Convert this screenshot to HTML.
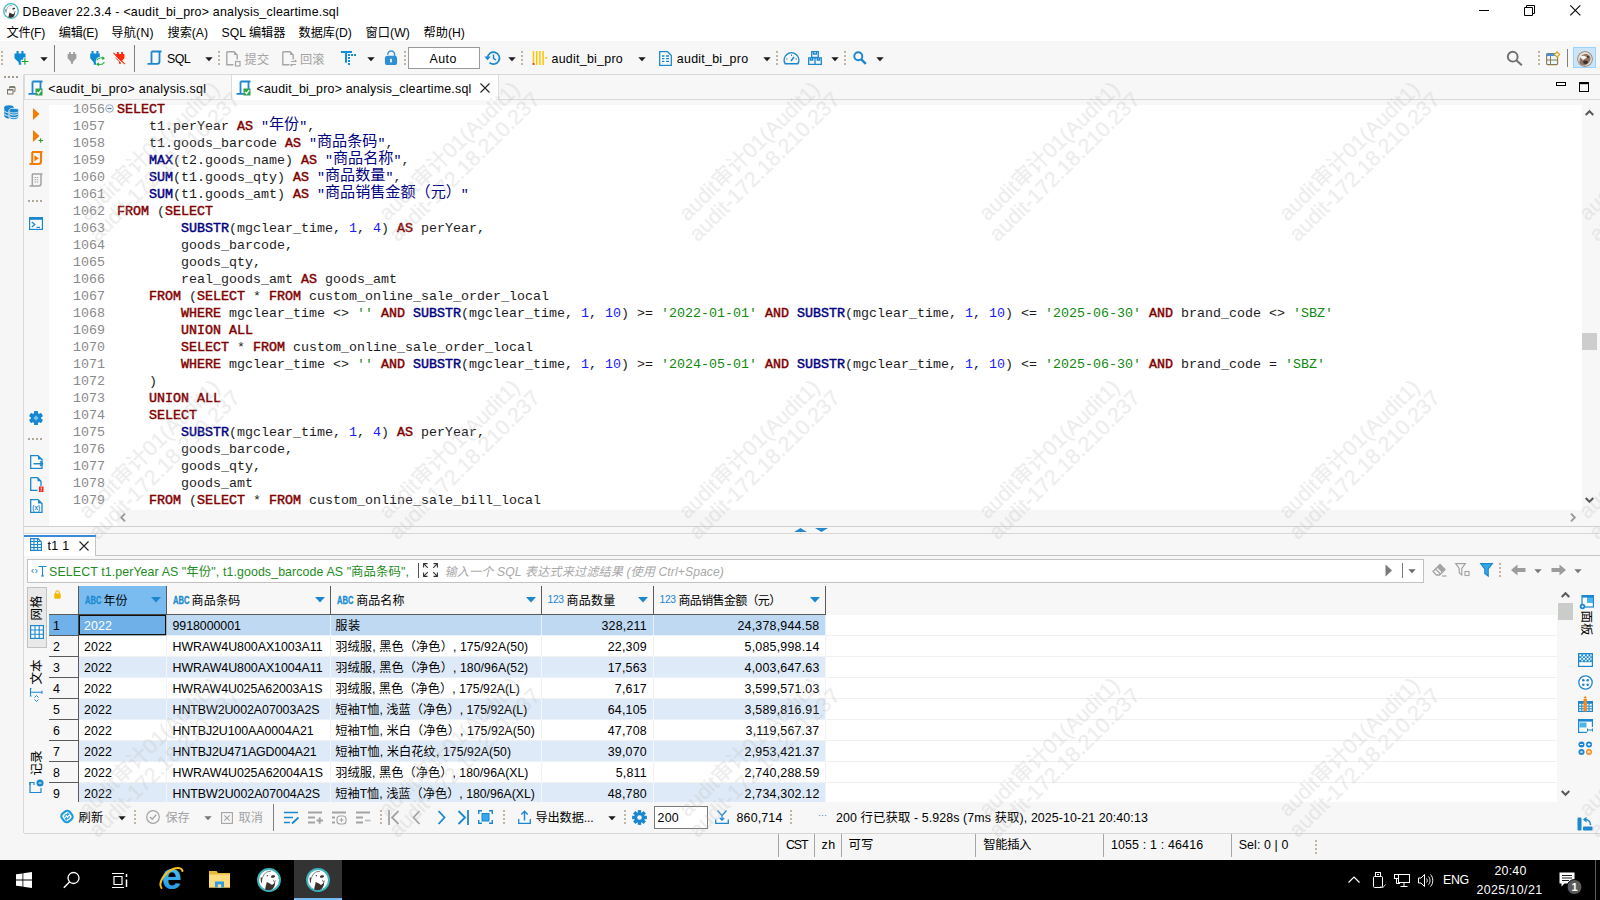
<!DOCTYPE html>
<html lang="zh"><head><meta charset="utf-8"><title>DBeaver</title>
<style>
*{box-sizing:border-box;margin:0;padding:0}
html,body{width:1600px;height:900px;overflow:hidden;background:#f0f0f0}
body{font-family:"Liberation Sans","Noto Sans CJK SC",sans-serif;font-size:12px;color:#000;position:relative}
.abs{position:absolute}
.t{position:absolute;white-space:pre;line-height:16px;height:16px}
svg{position:absolute;overflow:visible}
#title{left:0;top:0;width:1600px;height:22px;background:#fff}
#menu{left:0;top:22px;width:1600px;height:19px}
#menubg{left:0;top:22px;width:1600px;height:19px;background:#fff}
#tool{left:0;top:41px;width:1600px;height:33px;background:#f7f7f7}
#toolline{left:23px;top:74px;width:1577px;height:1px;background:#d9d9d9}
.sepv{position:absolute;width:1px;background:#a0a0a0}
.dots{position:absolute;width:2px;height:20px;background-image:linear-gradient(#b8b8b8 50%,transparent 50%);background-size:2px 4px}
.dd{position:absolute;width:0;height:0;border-left:4px solid transparent;border-right:4px solid transparent;border-top:4px solid #1a1a1a}
.mono{font-family:"Liberation Mono",monospace}

.ln{position:absolute;left:73px;width:32px;height:17px;line-height:17px;font-size:13.333px;color:#8a8a8a;white-space:pre}
.cl{position:absolute;height:17px;line-height:17px;font-size:13.333px;white-space:pre;color:#1c1c1c}
.cl .k{color:#7f0000;-webkit-text-stroke:0.450px #7f0000}
.cl .f{color:#000080;-webkit-text-stroke:0.450px #000080}
.cl .n{color:#1a1aff}
.cl .s{color:#0f8a0f}
.cl .q{color:#000080}
.cl .cj{font-family:"Noto Sans CJK SC",sans-serif;font-size:15.100px;line-height:1px;vertical-align:baseline;position:relative;top:-1px}

.vt{position:absolute}
.vt span{position:absolute;left:50%;top:50%;transform:translate(-50%,-50%) rotate(-90deg);white-space:pre;font-size:12.500px;line-height:16px}
.vt2{position:absolute}
.vt2 span{position:absolute;left:50%;top:50%;transform:translate(-50%,-50%) rotate(90deg);white-space:pre;font-size:12.500px;line-height:16px}
.abc{font-size:10px;font-weight:bold;color:#1b8bd1;-webkit-text-stroke:0.300px #1b8bd1;transform:scaleX(0.760);transform-origin:0 0}
.n123{font-size:10.300px;color:#1b87cf;letter-spacing:-0.350px}
.hd{font-size:12.500px}
.cell{font-size:12.600px}

.sb{font-size:12.500px}
.tk{color:#fff;font-size:12.600px}
.wm{position:absolute;width:0;height:0}
.wm div{position:absolute;left:-160px;top:-22px;width:320px;height:44px;text-align:center;white-space:pre;font-size:21.300px;line-height:22px;color:#bebebe;-webkit-text-stroke:0.200px #bebebe;opacity:0.270;transform:rotate(-44.500deg);transform-origin:50% 50%}
</style></head>
<body>
<div id="title" class="abs"><svg style="left:3px;top:3px" width="16" height="16" viewBox="0 0 32 32">
<circle cx="16" cy="16" r="14.600" fill="#fff" stroke="#3fb6be" stroke-width="2.600"/>
<path d="M10.700 28.500L13 18.800C14.500 19.800 17 20.500 19.900 22.600L22.200 21L24.500 17.200L23.700 22.600C23 25 22 26.500 20.700 28C18.500 30 13.500 30 10.700 28.500Z" fill="#3a2f2b"/>
<ellipse cx="21.400" cy="11.300" rx="2.800" ry="1.600" transform="rotate(-12 21.400 11.300)" fill="#3a2f2b"/>
<circle cx="13.800" cy="10.200" r="0.900" fill="#3a2f2b"/>
<path d="M5 12.500C6.500 12 7 14 6.800 16C6.600 18 6.800 19.500 6.500 20.500C5 18.500 4.500 15 5 12.500Z" fill="#4a3d38"/>
<path d="M6.800 15C7.500 11.500 10 6.500 13.500 5.200C15 4.600 17 4.500 18.500 4.700" stroke="#5a4d48" stroke-width="0.900" fill="none"/>
<path d="M21.800 15.700L23 18.800L24.900 16.500" stroke="#3a2f2b" stroke-width="0.800" fill="none"/></svg><div class="t" id="ttl" style="top:4.00px;font-size:12.4px;left:22.50px;letter-spacing:0.222px;">DBeaver 22.3.4 - &lt;audit_bi_pro&gt; analysis_cleartime.sql</div><svg style="left:1479px;top:5px" width="12" height="12"><path d="M0 5.500H10" stroke="#000" stroke-width="1" fill="none"/></svg><svg style="left:1524px;top:4px" width="12" height="12"><path d="M0.500 3.500H8.500V11.500H0.500Z M2.500 3.500V1.500H10.500V9.500H8.500" stroke="#000" stroke-width="1" fill="none"/></svg><svg style="left:1570px;top:5px" width="11" height="11"><path d="M0.300 0.300L10.300 10.300M10.300 0.300L0.300 10.300" stroke="#000" stroke-width="1.050" fill="none"/></svg></div>
<div id="menubg" class="abs"></div><div id="menu" class="abs" style="top:0;height:41px"><div class="t" style="top:25.00px;font-size:12.2px;left:6.50px;letter-spacing:-0.287px;">文件(F)</div><div class="t" style="top:25.00px;font-size:12.2px;left:58.75px;letter-spacing:-0.275px;">编辑(E)</div><div class="t" style="top:25.00px;font-size:12.2px;left:111.25px;letter-spacing:0.241px;">导航(N)</div><div class="t" style="top:25.00px;font-size:12.2px;left:167.50px;letter-spacing:-0.025px;">搜索(A)</div><div class="t" style="top:25.00px;font-size:12.2px;left:221.50px;letter-spacing:0.016px;">SQL 编辑器</div><div class="t" style="top:25.00px;font-size:12.2px;left:298.50px;letter-spacing:-0.014px;">数据库(D)</div><div class="t" style="top:25.00px;font-size:12.2px;left:365.50px;letter-spacing:0.080px;">窗口(W)</div><div class="t" style="top:25.00px;font-size:12.2px;left:423.50px;letter-spacing:0.021px;">帮助(H)</div></div>
<div id="tool" class="abs"></div><div id="toolline" class="abs"></div>
<div class="abs" id="tb" style="left:0;top:0"><div class="abs" style="left:1px;top:51px;width:2px;height:14px;background-image:linear-gradient(#bfb5a1 50%,transparent 50%);background-size:2px 4px"></div><svg style="left:9.5px;top:51px" width="24" height="16" viewBox="-10 0 24 16"><g transform="scale(1.0)"><path d="M-3.500 0h2.100v3h-2.100zM1.400 0h2.100v3h-2.100zM-5.50 2.400H5.50V7.300L1.250 11.400V13.800H-1.250V11.400L-5.50 7.300Z" fill="#0d8bd3"/></g><path d="M0.800 10.500H9M4.900 6.500V14.300" stroke="#f7f7f7" stroke-width="3.400" fill="none"/><path d="M1.600 10.500H8.400M4.900 7.200V13.800" stroke="#14a82b" stroke-width="1.150" fill="none"/></svg><svg style="left:39.5px;top:57px" width="8" height="5" viewBox="0 0 8 5"><path d="M0.3 0.3H7.700L4 4.300Z" fill="#1a1a1a"/></svg><div class="abs" style="left:54px;top:45px;width:1px;height:27px;background:#7f7f7f"></div><svg style="left:62.3px;top:52px" width="24" height="16" viewBox="-10 0 24 16"><g transform="scale(0.85)"><path d="M-3.500 0h2.100v3h-2.100zM1.400 0h2.100v3h-2.100zM-5.20 2.400H5.20V7.300L1.250 11.400V13.800H-1.250V11.400L-5.20 7.300Z" fill="#a0a0a0"/></g></svg><svg style="left:84.6px;top:51px" width="24" height="16" viewBox="-10 0 24 16"><g transform="scale(1.0)"><path d="M-3.500 0h2.100v3h-2.100zM1.400 0h2.100v3h-2.100zM-4.80 2.400H4.80V7.300L1.250 11.400V13.800H-1.250V11.400L-4.80 7.300Z" fill="#0d8bd3"/></g><circle cx="5.500" cy="10.500" r="4.800" fill="#f7f7f7"/><path d="M1.800 9.300C3 7 6 6.600 8.200 7.200M9.300 11.200C8 13.600 5 13.800 2.800 13.200" stroke="#14a82b" stroke-width="1.200" fill="none" stroke-dasharray="1.600 0.500"/><path d="M7.300 5.300L9.900 7.300L7.300 9.200ZM3.800 11.200L1.200 13.200L3.800 15.200Z" fill="#14a82b"/></svg><svg style="left:110.3px;top:52px" width="24" height="16" viewBox="-10 0 24 16"><g transform="scale(0.85)"><path d="M-3.500 0h2.100v3h-2.100zM1.400 0h2.100v3h-2.100zM-5.20 2.400H5.20V7.300L1.250 11.400V13.800H-1.250V11.400L-5.20 7.300Z" fill="#ff2a0a"/></g><path d="M-6.600 0.800L4.900 12.100" stroke="#f7f7f7" stroke-width="1.200" transform="translate(-0.850 0.850)"/><path d="M-6.600 0.800L4.900 12.100" stroke="#ff2a0a" stroke-width="1.150"/></svg><div class="abs" style="left:134px;top:45px;width:1px;height:27px;background:#7f7f7f"></div><svg style="left:147px;top:50px" width="16" height="16" viewBox="0 0 16 16">
<path d="M4.500 1.500H14.500M12.500 1.500V11.500C12.500 13.500 11 13.800 10 13.800H0.500 M4.500 1.500V13.500" stroke="#1b87cf" stroke-width="1.800" fill="none"/></svg><div class="t" id="sqlt" style="top:51.00px;font-size:12.4px;left:167.00px;letter-spacing:-0.632px;">SQL</div><svg style="left:204.5px;top:57px" width="8" height="5" viewBox="0 0 8 5"><path d="M0.3 0.3H7.700L4 4.300Z" fill="#1a1a1a"/></svg><div class="abs" style="left:218px;top:51px;width:2px;height:14px;background-image:linear-gradient(#bfb5a1 50%,transparent 50%);background-size:2px 4px"></div><svg style="left:226px;top:51px" width="16" height="16" viewBox="0 0 16 16">
<path d="M0.800 0.800H8L11.200 4V8.500M7.500 13.800H0.800V0.800" stroke="#a6a6a6" stroke-width="1.400" fill="none"/><path d="M8 0.800V4H11.200Z" fill="#a6a6a6"/><rect x="9.500" y="10.500" width="4.500" height="4.500" fill="#f7f7f7" stroke="#a6a6a6" stroke-width="1.200"/></svg><div class="t" style="top:51.50px;font-size:12.2px;color:#a3a3a3;left:244.50px;letter-spacing:0.312px;">提交</div><svg style="left:282px;top:51px" width="16" height="16" viewBox="0 0 16 16">
<path d="M0.800 0.800H8L11.200 4V8.500M7.500 13.800H0.800V0.800" stroke="#a6a6a6" stroke-width="1.400" fill="none"/><path d="M8 0.800V4H11.200Z" fill="#a6a6a6"/><path d="M9 10.500H14.500M12.800 9l1.700 1.500M8.500 13.500H14M10.200 15L8.500 13.500" stroke="#a6a6a6" stroke-width="1.100" fill="none"/></svg><div class="t" style="top:51.50px;font-size:12.2px;color:#a3a3a3;left:300.10px;letter-spacing:0.012px;">回滚</div><svg style="left:340px;top:50px" width="17" height="16" viewBox="0 0 17 16"><path d="M0.900 2H12M6 2V12.800" stroke="#1590d8" stroke-width="2" fill="none"/><g fill="#1590d8"><rect x="8" y="4" width="2" height="2"/><rect x="11" y="4" width="2" height="2"/><rect x="14" y="4" width="2" height="2"/><rect x="8" y="7" width="2" height="2"/><rect x="8" y="10" width="2" height="2"/><rect x="8" y="13" width="2" height="2"/></g></svg><svg style="left:366.5px;top:57px" width="8" height="5" viewBox="0 0 8 5"><path d="M0.3 0.3H7.700L4 4.300Z" fill="#1a1a1a"/></svg><svg style="left:384px;top:50px" width="14" height="16" viewBox="0 0 14 16"><path d="M3.800 4.800V4.500A3.400 3.400 0 0 1 10.600 4.500V7" stroke="#3a93d6" stroke-width="1.500" fill="none"/><rect x="0.900" y="5.800" width="12.200" height="9.200" rx="2.600" fill="#2f8fd3"/><rect x="6.100" y="8.800" width="1.800" height="3.600" fill="#e8f3fb"/></svg><div class="abs" style="left:404px;top:51px;width:2px;height:14px;background-image:linear-gradient(#bfb5a1 50%,transparent 50%);background-size:2px 4px"></div><div class="abs" style="left:408px;top:47px;width:72px;height:22px;background:#fff;border:1px solid #9a9a9a"></div><div class="t" style="top:51.00px;font-size:12.4px;left:429.50px;letter-spacing:0.475px;">Auto</div><svg style="left:484px;top:50px" width="17" height="16" viewBox="0 0 17 16"><path d="M3.500 8A6 6 0 1 1 5.500 12.600" stroke="#1b87cf" stroke-width="1.700" fill="none"/><path d="M0.300 6.500H6.800L3.500 10.200Z" fill="#1b87cf"/><path d="M9.500 4.500V8.300L12 10" stroke="#1b87cf" stroke-width="1.500" fill="none"/></svg><svg style="left:507.5px;top:57px" width="8" height="5" viewBox="0 0 8 5"><path d="M0.3 0.3H7.700L4 4.300Z" fill="#1a1a1a"/></svg><div class="abs" style="left:521px;top:51px;width:2px;height:14px;background-image:linear-gradient(#bfb5a1 50%,transparent 50%);background-size:2px 4px"></div><svg style="left:532px;top:51px" width="16" height="15" viewBox="0 0 16 15"><path d="M1.500 0V14M4.700 0V14M7.900 0V14M11.100 0V14" stroke="#ffc400" stroke-width="1.500"/><rect x="0.700" y="12" width="1.700" height="2" fill="#e8342a"/><rect x="13.500" y="6" width="1.600" height="2" fill="#ffc400"/></svg><div class="t" id="abp1" style="top:51.00px;font-size:12.4px;left:551.50px;letter-spacing:0.275px;">audit_bi_pro</div><svg style="left:637.5px;top:57px" width="8" height="5" viewBox="0 0 8 5"><path d="M0.3 0.3H7.700L4 4.300Z" fill="#1a1a1a"/></svg><svg style="left:659px;top:51px" width="13" height="15" viewBox="0 0 13 15"><path d="M0.700 0.700H8.500L12.300 4.500V14.300H0.700Z" stroke="#1b87cf" stroke-width="1.300" fill="#fff"/><path d="M3 5H5.500M7 5H10M3 7.700H5.500M7 7.700H10M3 10.400H5.500M7 10.400H10" stroke="#1b87cf" stroke-width="1.300"/></svg><div class="t" id="abp2" style="top:51.00px;font-size:12.4px;left:676.80px;letter-spacing:0.275px;">audit_bi_pro</div><svg style="left:762.5px;top:57px" width="8" height="5" viewBox="0 0 8 5"><path d="M0.3 0.3H7.700L4 4.300Z" fill="#1a1a1a"/></svg><div class="abs" style="left:776px;top:51px;width:2px;height:14px;background-image:linear-gradient(#bfb5a1 50%,transparent 50%);background-size:2px 4px"></div><svg style="left:783px;top:52px" width="17" height="13" viewBox="0 0 17 13"><path d="M2.200 11.800A7.300 7.300 0 1 1 14.800 11.800Z" stroke="#1b87cf" stroke-width="1.500" fill="none" stroke-linejoin="round"/><path d="M8 9L11 5" stroke="#1b87cf" stroke-width="1.600"/><path d="M3 7H4.500M8.500 2.500V4M12.500 7H14" stroke="#1b87cf" stroke-width="1"/></svg><svg style="left:808px;top:51px" width="14" height="14" viewBox="0 0 14 14"><path d="M3.700 0.700H10.300V6.500H3.700ZM0.700 6.800H13.300V13.300H0.700ZM7 6.800V13.300M5.500 0.700V3H8.500V0.700M2.500 6.800V9H4.700V6.800M9.300 6.800V9H11.500V6.800" stroke="#1b87cf" stroke-width="1.300" fill="none"/></svg><svg style="left:830.5px;top:57px" width="8" height="5" viewBox="0 0 8 5"><path d="M0.3 0.3H7.700L4 4.300Z" fill="#1a1a1a"/></svg><div class="abs" style="left:844px;top:51px;width:2px;height:14px;background-image:linear-gradient(#bfb5a1 50%,transparent 50%);background-size:2px 4px"></div><svg style="left:853px;top:51px" width="14" height="14" viewBox="0 0 14 14"><circle cx="5.300" cy="5.300" r="4" stroke="#1b87cf" stroke-width="1.900" fill="none"/><path d="M8.300 8.300L12.800 12.800" stroke="#1b87cf" stroke-width="2.400"/></svg><svg style="left:875.5px;top:57px" width="8" height="5" viewBox="0 0 8 5"><path d="M0.3 0.3H7.700L4 4.300Z" fill="#1a1a1a"/></svg><svg style="left:1506px;top:50px" width="17" height="17" viewBox="0 0 17 17"><circle cx="6.700" cy="6.700" r="4.900" stroke="#6f6f6f" stroke-width="1.900" fill="none"/><path d="M10.300 10.300L15.800 15.300" stroke="#6f6f6f" stroke-width="2"/></svg><div class="abs" style="left:1538px;top:51px;width:2px;height:14px;background-image:linear-gradient(#bfb5a1 50%,transparent 50%);background-size:2px 4px"></div><svg style="left:1546px;top:51px" width="15" height="15" viewBox="0 0 15 15"><rect x="0.600" y="2.600" width="11" height="11" rx="1" fill="#e8f6fd" stroke="#8a7a4e" stroke-width="1.100"/><rect x="0.600" y="2.600" width="11" height="2.400" fill="#4a90d9"/><path d="M4.500 5V13.500M0.600 9H11.600" stroke="#8a7a4e" stroke-width="1"/><path d="M11 0L14.500 3.500L11 7L7.500 3.500Z" fill="#d9a420"/><path d="M11 1.800V5.200M9.300 3.500H12.700" stroke="#fff" stroke-width="1"/></svg><div class="abs" style="left:1567px;top:49px;width:1px;height:18px;background:#808080"></div><div class="abs" style="left:1573px;top:47px;width:23px;height:21px;background:#cce4f7;border:1px solid #99d1ff"></div><svg style="left:1577px;top:50.500px" width="16" height="16" viewBox="0 0 32 32"><circle cx="16" cy="16" r="15.500" fill="#8a7466"/><circle cx="16" cy="16" r="14" fill="#e6e0d8"/><path d="M5 24C4 14 9 6 17 6C24 6 28 11 27 17C26 22 22 26 16 29C11 29 7 27 5 24Z" fill="#8b7263"/><path d="M6 12C10 8 16 9 20 13L12 18Z" fill="#f5f2ee"/><path d="M12 22C14 18 20 18 22 22C21 27 14 28 12 22Z" fill="#3c2f2a"/><circle cx="22" cy="12" r="1.800" fill="#2b2320"/></svg></div>

<div class="abs" style="left:0;top:74px;width:24px;height:786px;background:#f6f6f6"></div><div class="abs" style="left:23px;top:75px;width:1px;height:758px;background:#d9d9d9"></div><div class="abs" style="left:4px;top:76px;width:15px;height:2px;background-image:linear-gradient(90deg,#a39c8f 50%,transparent 50%);background-size:4px 2px"></div><svg style="left:7px;top:86px" width="9" height="9" viewBox="0 0 9 9"><path d="M2.500 2.500V1H8V5.500H6.500" stroke="#7d776c" stroke-width="1" fill="none"/><path d="M2.500 1H8" stroke="#7d776c" stroke-width="1.800"/><rect x="0.500" y="3.500" width="5.500" height="4.500" fill="none" stroke="#7d776c" stroke-width="1"/><path d="M0.500 3.800H6" stroke="#7d776c" stroke-width="1.600"/></svg><svg style="left:4px;top:105px" width="15" height="15" viewBox="0 0 15 15">
<g fill="#1b87cf"><path d="M0.300 2.600v8.200c0 2.800 5 2.800 5 2.800V2.600z"/><ellipse cx="5" cy="2.600" rx="4.700" ry="2.300"/>
<path d="M5 5.600v6.400c0 3.300 9.700 3.300 9.700 0V5.600z" stroke="#f6f6f6" stroke-width="0.800"/><ellipse cx="9.850" cy="5.600" rx="4.850" ry="2.300" stroke="#f6f6f6" stroke-width="0.800"/></g>
<path d="M0.300 5.800c0.800 1.300 2.600 1.900 4.500 2M0.300 8.800c0.800 1.300 2.600 1.900 4.500 2M5 8.200c1.500 2.400 8.200 2.400 9.700 0M5 10.900c1.500 2.400 8.200 2.400 9.700 0" stroke="#f6f6f6" stroke-width="1" fill="none"/></svg>
<div class="abs" style="left:24px;top:75px;width:1576px;height:25px;background:#f7f7f7"></div><div class="abs" style="left:24px;top:99px;width:1576px;height:1px;background:#d8d8d8"></div><div class="abs" style="left:24px;top:75px;width:208px;height:25px;background:#f8f8f8;border:1px solid #dcdcdc;border-top:none"></div><svg style="left:28px;top:80px" width="16" height="16" viewBox="0 0 16 16">
<path d="M4.500 1.500H14.500M12.500 1.500V11.500C12.500 13.500 11 13.800 10 13.800H0.500 M4.500 1.500V13.500" stroke="#1b87cf" stroke-width="1.800" fill="none"/><rect x="7.500" y="8.500" width="7" height="7" fill="#2ea44f"/><path d="M9 12l1.600 1.700L13.200 10" stroke="#fff" stroke-width="1.300" fill="none"/></svg><div class="t" id="tab1" style="top:81.00px;font-size:12.4px;left:48.30px;letter-spacing:0.286px;">&lt;audit_bi_pro&gt; analysis.sql</div><div class="abs" style="left:232px;top:75px;width:267px;height:26px;background:#fff;border-right:1px solid #dcdcdc"></div><svg style="left:236px;top:80px" width="16" height="16" viewBox="0 0 16 16">
<path d="M4.500 1.500H14.500M12.500 1.500V11.500C12.500 13.500 11 13.800 10 13.800H0.500 M4.500 1.500V13.500" stroke="#1b87cf" stroke-width="1.800" fill="none"/><rect x="7.500" y="8.500" width="7" height="7" fill="#2ea44f"/><path d="M9 12l1.600 1.700L13.200 10" stroke="#fff" stroke-width="1.300" fill="none"/></svg><div class="t" id="tab2" style="top:81.00px;font-size:12.4px;left:256.50px;letter-spacing:0.207px;">&lt;audit_bi_pro&gt; analysis_cleartime.sql</div><svg style="left:480px;top:83px" width="10" height="10" viewBox="0 0 10 10"><path d="M0.500 0.500L9.500 9.500M9.500 0.500L0.500 9.500" stroke="#222" stroke-width="1.100"/></svg><svg style="left:1556px;top:82px" width="10" height="4"><rect x="0.500" y="0.500" width="9" height="3" fill="#fff" stroke="#000"/></svg><svg style="left:1579px;top:82px" width="10" height="10"><rect x="0.500" y="0.500" width="9" height="9" fill="#fff" stroke="#000"/><path d="M0.500 1.500H9.500" stroke="#000" stroke-width="1.400"/></svg>
<div class="abs" style="left:24px;top:100px;width:1576px;height:427px;background:#f7f7f7"></div><svg style="left:33px;top:108px" width="7" height="12"><path d="M0 0L6.500 6L0 12Z" fill="#f57c00"/></svg><svg style="left:33px;top:130px" width="11" height="13"><path d="M0 0L6.500 6L0 12Z" fill="#f57c00"/><path d="M5.500 10.500H10M7.700 8.300V12.800" stroke="#2a9a2a" stroke-width="1.100"/></svg><svg style="left:29px;top:151px" width="14" height="14" viewBox="0 0 14 14"><path d="M3 1H13.500M12 1V10.500C12 12.500 10.500 13 9.500 13H0.500M3.300 1V13" stroke="#f57c00" stroke-width="2.100" fill="none"/><path d="M5.500 4.300L9.800 7.200L5.500 10.200Z" fill="#f57c00"/></svg><svg style="left:29px;top:173px" width="14" height="14" viewBox="0 0 14 14"><path d="M3 1H13.500M12 1V10.500C12 12.500 10.500 13 9.500 13H0.500M3.300 1V13" stroke="#a3a3a3" stroke-width="1.500" fill="none"/><path d="M5.500 4.500H10M5.500 6.800H10M5.500 9H10" stroke="#a3a3a3" stroke-width="1.100" stroke-dasharray="1.500 0.700"/></svg><div class="abs" style="left:28px;top:200px;width:15px;height:2px;background-image:linear-gradient(90deg,#b0a898 50%,transparent 50%);background-size:4px 2px"></div><svg style="left:29px;top:217px" width="14" height="13" viewBox="0 0 14 13"><rect x="0.600" y="0.600" width="12.800" height="11.800" fill="#fff" stroke="#1b87cf" stroke-width="1.200"/><rect x="0.600" y="0.600" width="12.800" height="2.200" fill="#1b87cf"/><path d="M2.800 5L5.800 7.500L2.800 10M7.500 10.300H11" stroke="#1b87cf" stroke-width="1.300" fill="none"/></svg><svg style="left:29px;top:411px" width="14" height="14" viewBox="-7 -7 14 14"><g fill="#1b87cf"><circle r="5.200"/><rect x="-2" y="-7" width="4" height="4" rx="0.600" transform="rotate(0)"/><rect x="-2" y="-7" width="4" height="4" rx="0.600" transform="rotate(60)"/><rect x="-2" y="-7" width="4" height="4" rx="0.600" transform="rotate(120)"/><rect x="-2" y="-7" width="4" height="4" rx="0.600" transform="rotate(180)"/><rect x="-2" y="-7" width="4" height="4" rx="0.600" transform="rotate(240)"/><rect x="-2" y="-7" width="4" height="4" rx="0.600" transform="rotate(300)"/></g><path d="M0 -2.600L2.600 0L0 2.600L-2.600 0Z" fill="#6cc9f2"/></svg><div class="abs" style="left:28px;top:438px;width:15px;height:2px;background-image:linear-gradient(90deg,#b0a898 50%,transparent 50%);background-size:4px 2px"></div><svg style="left:30px;top:455px" width="13" height="14" viewBox="0 0 13 14"><path d="M0.700 0.700H8L12 4.500V13.300H0.700Z" stroke="#1b87cf" stroke-width="1.300" fill="#fff"/><path d="M8 0.700V4.500H12Z" fill="#1b87cf"/><path d="M3.500 8.700H12.500M10 6.300L12.500 8.700L10 11.100" stroke="#1b87cf" stroke-width="1.400" fill="none"/></svg><svg style="left:30px;top:477px" width="14" height="15" viewBox="0 0 14 15"><path d="M0.700 0.700H7.500L11 4.200V9M7.500 13.300H0.700V0.700" stroke="#1b87cf" stroke-width="1.300" fill="none"/><path d="M7.500 0.700V4.200H11Z" fill="#1b87cf"/><rect x="9" y="9.500" width="4.500" height="5.500" fill="#ee2a1e"/><path d="M11.250 10.500V12.500M11.250 13.300V14.200" stroke="#fff" stroke-width="1"/></svg><svg style="left:30px;top:499px" width="13" height="14" viewBox="0 0 13 14"><path d="M0.700 0.700H8L12 4.500V13.300H0.700Z" stroke="#1b87cf" stroke-width="1.300" fill="#fff"/><path d="M8 0.700V4.500H12Z" fill="#1b87cf"/><text x="6.300" y="11.300" font-size="6.500" font-weight="bold" font-family="Liberation Sans, sans-serif" text-anchor="middle" fill="#1b87cf">(x)</text></svg>
<div class="abs" id="edwhite" style="left:49px;top:105px;width:1533px;height:405px;background:#fff"></div><div class="abs" style="left:49px;top:510px;width:68px;height:16px;background:#fff"></div><div class="abs" style="left:117px;top:510px;width:1465px;height:16px;background:#f6f6f6"></div><div class="abs" style="left:1582px;top:105px;width:17px;height:405px;background:#f7f7f7"></div><div class="abs" style="left:1582px;top:333px;width:15px;height:17px;background:#cdcdcd"></div><svg style="left:1585px;top:110px" width="9" height="6"><path d="M0.700 5L4.500 1.200L8.300 5" stroke="#5a5a5a" stroke-width="2" fill="none"/></svg><svg style="left:1585px;top:497px" width="9" height="6"><path d="M0.700 1L4.500 4.800L8.300 1" stroke="#5a5a5a" stroke-width="2" fill="none"/></svg><svg style="left:120px;top:513px" width="6" height="9"><path d="M5 0.700L1.200 4.500L5 8.300" stroke="#9a9a9a" stroke-width="1.900" fill="none"/></svg><svg style="left:1570px;top:513px" width="6" height="9"><path d="M1 0.700L4.800 4.500L1 8.300" stroke="#9a9a9a" stroke-width="1.900" fill="none"/></svg><div class="abs mono" id="code" style="left:0;top:0"><div class="ln" style="top:101px">1056</div><div class="cl" style="top:101px;left:117px"><span class="k">SELECT</span></div>
<div class="ln" style="top:118px">1057</div><div class="cl" style="top:118px;left:149px">t1.perYear <span class="k">AS</span> <span class="q">"<span class="cj">年份</span>"</span>,</div>
<div class="ln" style="top:135px">1058</div><div class="cl" style="top:135px;left:149px">t1.goods_barcode <span class="k">AS</span> <span class="q">"<span class="cj">商品条码</span>"</span>,</div>
<div class="ln" style="top:152px">1059</div><div class="cl" style="top:152px;left:149px"><span class="f">MAX</span>(t2.goods_name) <span class="k">AS</span> <span class="q">"<span class="cj">商品名称</span>"</span>,</div>
<div class="ln" style="top:169px">1060</div><div class="cl" style="top:169px;left:149px"><span class="f">SUM</span>(t1.goods_qty) <span class="k">AS</span> <span class="q">"<span class="cj">商品数量</span>"</span>,</div>
<div class="ln" style="top:186px">1061</div><div class="cl" style="top:186px;left:149px"><span class="f">SUM</span>(t1.goods_amt) <span class="k">AS</span> <span class="q">"<span class="cj">商品销售金额（元）</span>"</span></div>
<div class="ln" style="top:203px">1062</div><div class="cl" style="top:203px;left:117px"><span class="k">FROM</span> (<span class="k">SELECT</span></div>
<div class="ln" style="top:220px">1063</div><div class="cl" style="top:220px;left:181px"><span class="f">SUBSTR</span>(mgclear_time, <span class="n">1</span>, <span class="n">4</span>) <span class="k">AS</span> perYear,</div>
<div class="ln" style="top:237px">1064</div><div class="cl" style="top:237px;left:181px">goods_barcode,</div>
<div class="ln" style="top:254px">1065</div><div class="cl" style="top:254px;left:181px">goods_qty,</div>
<div class="ln" style="top:271px">1066</div><div class="cl" style="top:271px;left:181px">real_goods_amt <span class="k">AS</span> goods_amt</div>
<div class="ln" style="top:288px">1067</div><div class="cl" style="top:288px;left:149px"><span class="k">FROM</span> (<span class="k">SELECT</span> * <span class="k">FROM</span> custom_online_sale_order_local</div>
<div class="ln" style="top:305px">1068</div><div class="cl" style="top:305px;left:181px"><span class="k">WHERE</span> mgclear_time &lt;&gt; <span class="s">''</span> <span class="k">AND</span> <span class="f">SUBSTR</span>(mgclear_time, <span class="n">1</span>, <span class="n">10</span>) &gt;= <span class="s">'2022-01-01'</span> <span class="k">AND</span> <span class="f">SUBSTR</span>(mgclear_time, <span class="n">1</span>, <span class="n">10</span>) &lt;= <span class="s">'2025-06-30'</span> <span class="k">AND</span> brand_code &lt;&gt; <span class="s">'SBZ'</span></div>
<div class="ln" style="top:322px">1069</div><div class="cl" style="top:322px;left:181px"><span class="k">UNION ALL</span></div>
<div class="ln" style="top:339px">1070</div><div class="cl" style="top:339px;left:181px"><span class="k">SELECT</span> * <span class="k">FROM</span> custom_online_sale_order_local</div>
<div class="ln" style="top:356px">1071</div><div class="cl" style="top:356px;left:181px"><span class="k">WHERE</span> mgclear_time &lt;&gt; <span class="s">''</span> <span class="k">AND</span> <span class="f">SUBSTR</span>(mgclear_time, <span class="n">1</span>, <span class="n">10</span>) &gt;= <span class="s">'2024-05-01'</span> <span class="k">AND</span> <span class="f">SUBSTR</span>(mgclear_time, <span class="n">1</span>, <span class="n">10</span>) &lt;= <span class="s">'2025-06-30'</span> <span class="k">AND</span> brand_code = <span class="s">'SBZ'</span></div>
<div class="ln" style="top:373px">1072</div><div class="cl" style="top:373px;left:149px">)</div>
<div class="ln" style="top:390px">1073</div><div class="cl" style="top:390px;left:149px"><span class="k">UNION ALL</span></div>
<div class="ln" style="top:407px">1074</div><div class="cl" style="top:407px;left:149px"><span class="k">SELECT</span></div>
<div class="ln" style="top:424px">1075</div><div class="cl" style="top:424px;left:181px"><span class="f">SUBSTR</span>(mgclear_time, <span class="n">1</span>, <span class="n">4</span>) <span class="k">AS</span> perYear,</div>
<div class="ln" style="top:441px">1076</div><div class="cl" style="top:441px;left:181px">goods_barcode,</div>
<div class="ln" style="top:458px">1077</div><div class="cl" style="top:458px;left:181px">goods_qty,</div>
<div class="ln" style="top:475px">1078</div><div class="cl" style="top:475px;left:181px">goods_amt</div>
<div class="ln" style="top:492px">1079</div><div class="cl" style="top:492px;left:149px"><span class="k">FROM</span> (<span class="k">SELECT</span> * <span class="k">FROM</span> custom_online_sale_bill_local</div>
</div><svg style="left:105px;top:104px" width="9" height="9"><circle cx="4.500" cy="4.500" r="3.800" fill="#eef3f8" stroke="#8fa3bd" stroke-width="0.900"/><path d="M2.500 4.500H6.500" stroke="#55657a" stroke-width="1"/></svg>
<div class="abs" style="left:24px;top:527px;width:1576px;height:306px;background:#f7f7f7"></div><div class="abs" style="left:24px;top:526px;width:1576px;height:1px;background:#d0d0d0"></div><div class="abs" style="left:24px;top:533px;width:1576px;height:1px;background:#d8d8d8"></div><svg style="left:794px;top:527px" width="35" height="6"><path d="M0 5L6.500 1L13 5Z M21 1H34L27.500 5Z" fill="#2588cf"/></svg><div class="abs" style="left:95px;top:555px;width:1505px;height:1px;background:#c4c4c4"></div><div class="abs" style="left:24px;top:534px;width:72px;height:22px;background:#fff;border-right:1px solid #c4c4c4"></div><div class="abs" style="left:24px;top:534.500px;width:72px;height:2px;background:#3b8ad9"></div><svg style="left:30px;top:538px" width="12" height="13" viewBox="0 0 12 13"><path d="M0.600 0.600H8L11.400 4V12.400H0.600Z" fill="#fff" stroke="#1b87cf" stroke-width="1.200"/><path d="M0.600 3.500H11M0.600 6.500H11M0.600 9.500H11M4 0.600V12.400M7.600 0.600V12.400" stroke="#1b87cf" stroke-width="1.100"/></svg><div class="t" id="rt" style="top:538.00px;font-size:12.4px;left:47.50px;letter-spacing:0.332px;">t1 1</div><svg style="left:79px;top:541px" width="10" height="10" viewBox="0 0 10 10"><path d="M0.500 0.500L9.500 9.500M9.500 0.500L0.500 9.500" stroke="#222" stroke-width="1.100"/></svg>
<div class="abs" style="left:27px;top:559px;width:1397px;height:24px;background:#fff;border:1px solid #c2c2c2"></div><svg style="left:31px;top:565px" width="16" height="12" viewBox="0 0 16 12"><path d="M2.500 4L0.700 6L2.500 8M4.500 4L6.300 6L4.500 8" stroke="#1b87cf" stroke-width="1" fill="none"/><path d="M7.500 1.500H15.500M11.500 1.500V11M10 11H13" stroke="#1b87cf" stroke-width="1.100" fill="none"/></svg><div class="t" id="ftxt" style="top:564.00px;font-size:12.4px;color:#1e8c1e;left:49.10px;letter-spacing:0.091px;">SELECT t1.perYear AS "年份", t1.goods_barcode AS "商品条码",</div><div class="abs" style="left:418px;top:563px;width:1px;height:15px;background:#555"></div><svg style="left:423px;top:563px" width="15" height="14" viewBox="0 0 15 14"><path d="M0.600 4.500V0.600H4.500M10.500 0.600H14.400V4.500M14.400 9.500V13.400H10.500M4.500 13.400H0.600V9.500M0.600 0.600L4.800 4.800M14.400 0.600L10.200 4.800M14.400 13.400L10.200 9.200M0.600 13.400L4.800 9.200" stroke="#333" stroke-width="1.100" fill="none"/></svg><div class="t" id="ph" style="top:564.00px;font-size:12.2px;color:#a9a9a9;font-style:italic;left:444.50px;letter-spacing:0.073px;">输入一个 SQL 表达式来过滤结果 (使用 Ctrl+Space)</div><svg style="left:1385px;top:564px" width="8" height="13"><path d="M0.500 0.500L7 6.500L0.500 12.500Z" fill="#7a7a7a"/></svg><div class="abs" style="left:1402px;top:563px;width:1px;height:15px;background:#7a7a7a"></div><svg style="left:1408px;top:568.5px" width="8" height="5" viewBox="0 0 8 5"><path d="M0.3 0.3H7.700L4 4.300Z" fill="#6a6a6a"/></svg><svg style="left:1432px;top:563px" width="15" height="14" viewBox="0 0 15 14"><path d="M1 8.500L8 1.500L13 6.500L7.500 12H4.500Z" fill="none" stroke="#a3a3a3" stroke-width="1.300"/><path d="M8 1.500L13 6.500L10 9.500L5 4.500Z" fill="#a3a3a3"/><path d="M3.500 6L9 11.500" stroke="#a3a3a3" stroke-width="1.200"/><path d="M10 13H14.500" stroke="#a3a3a3" stroke-width="1.200"/></svg><svg style="left:1455px;top:563px" width="15" height="14" viewBox="0 0 15 14"><path d="M0.700 0.700H10.300L6.800 5.500V12L4.200 9.800V5.500Z" fill="none" stroke="#a3a3a3" stroke-width="1.200"/><rect x="10" y="8.500" width="4" height="4" fill="none" stroke="#a3a3a3" stroke-width="1.100"/></svg><svg style="left:1480px;top:563px" width="13" height="14" viewBox="0 0 13 14"><path d="M0.700 0.700H12.300L8.200 6V13L4.800 10.500V6Z" fill="#35a8e8" stroke="#1b87cf" stroke-width="1.200"/></svg><div class="abs" style="left:1499px;top:563px;width:2px;height:14px;background-image:linear-gradient(#bfb5a1 50%,transparent 50%);background-size:2px 4px"></div><svg style="left:1511px;top:564px" width="15" height="12"><path d="M0 6L6.500 0.500V4H14.500V8H6.500V11.500Z" fill="#9c9c9c"/></svg><svg style="left:1533.5px;top:568.5px" width="8" height="5" viewBox="0 0 8 5"><path d="M0.3 0.3H7.700L4 4.300Z" fill="#777"/></svg><svg style="left:1551px;top:564px" width="15" height="12"><path d="M15 6L8.500 0.500V4H0.500V8H8.500V11.500Z" fill="#9c9c9c"/></svg><svg style="left:1573.5px;top:568.5px" width="8" height="5" viewBox="0 0 8 5"><path d="M0.3 0.3H7.700L4 4.300Z" fill="#777"/></svg>
<div class="abs" style="left:27px;top:587px;width:20px;height:61px;background:#e9e9e9;border:1px solid #c2c2c2"></div><div class="vt" style="left:27px;top:594px;width:20px;height:28px" id="vt1"><span>网格</span></div><svg style="left:30px;top:625px" width="14" height="14" viewBox="0 0 14 14"><rect x="0.600" y="0.600" width="12.800" height="12.800" fill="#fff" stroke="#1b87cf" stroke-width="1.200"/><path d="M0.600 5H13.400M0.600 9.200H13.400M5 0.600V13.400M9.200 0.600V13.400" stroke="#1b87cf" stroke-width="1.100"/></svg><div class="vt" style="left:27px;top:658px;width:20px;height:28px"><span>文本</span></div><svg style="left:30px;top:688px" width="13" height="15" viewBox="0 0 13 15"><g transform="rotate(-90 6.500 7.500)"><path d="M2.500 5.500L0.500 7.500L2.500 9.500M4.500 5.500L6.500 7.500L4.500 9.500" stroke="#1b87cf" stroke-width="1" fill="none"/><path d="M6 2.500V1.500H13.500V2.500M9.750 1.500V13M8.300 13H11.200" stroke="#1b87cf" stroke-width="1.100" fill="none"/></g></svg><div class="vt" style="left:27px;top:749px;width:20px;height:28px"><span>记录</span></div><svg style="left:29px;top:779px" width="15" height="15" viewBox="0 0 15 15"><path d="M5 3.500H1V13.500H12V9" stroke="#1b87cf" stroke-width="1.200" fill="none"/><path d="M1 6V3.500H5V6" stroke="#1b87cf" stroke-width="1.200" fill="none"/><circle cx="11" cy="4" r="3.500" fill="#1b87cf"/><path d="M9.500 4H12.500" stroke="#fff" stroke-width="1"/></svg>
<div class="abs" id="grid" style="left:49px;top:586px;width:1508px;height:216px;background:#fff;overflow:hidden"><div class="abs" style="left:0;top:0;width:1508px;height:28px;background:#f7f7f7"></div><div class="abs" style="left:0;top:28px;width:777px;height:1px;background:#5a5a5a"></div><div class="abs" style="left:777px;top:28px;width:731px;height:1px;background:#f7f7f7"></div><svg style="left:5px;top:4px" width="7" height="9" viewBox="0 0 7 9"><path d="M1.800 4V2.500A1.700 1.700 0 0 1 5.200 2.500V4" stroke="#f0b400" stroke-width="1.100" fill="none"/><rect x="0.300" y="3.500" width="6.400" height="5.200" rx="0.800" fill="#f5b800"/></svg><div class="abs" style="left:30px;top:0;width:88px;height:28px;background:#7bbcf0;border-right:1px solid #5a5a5a"></div><div class="t abc" style="left:35.5px;top:6.600px">ABC</div><div class="t" style="top:7.00px;font-size:12px;left:54.50px;letter-spacing:-0.008px;">年份</div><svg style="left:102px;top:11px" width="10" height="6"><path d="M0 0H10L5 5.500Z" fill="#1b87cf"/></svg><div class="abs" style="left:118px;top:0;width:164px;height:28px;background:transparent;border-right:1px solid #5a5a5a"></div><div class="t abc" style="left:123.5px;top:6.600px">ABC</div><div class="t" style="top:7.00px;font-size:12px;left:142.50px;letter-spacing:0.246px;">商品条码</div><svg style="left:266px;top:11px" width="10" height="6"><path d="M0 0H10L5 5.500Z" fill="#1b87cf"/></svg><div class="abs" style="left:282px;top:0;width:211px;height:28px;background:transparent;border-right:1px solid #5a5a5a"></div><div class="t abc" style="left:287.5px;top:6.600px">ABC</div><div class="t" style="top:7.00px;font-size:12px;left:307.25px;letter-spacing:0.059px;">商品名称</div><svg style="left:477px;top:11px" width="10" height="6"><path d="M0 0H10L5 5.500Z" fill="#1b87cf"/></svg><div class="abs" style="left:493px;top:0;width:112px;height:28px;background:transparent;border-right:1px solid #5a5a5a"></div><div class="t n123" style="left:498.5px;top:5.500px">123</div><div class="t" style="top:7.00px;font-size:12px;left:517.50px;letter-spacing:0.246px;">商品数量</div><svg style="left:589px;top:11px" width="10" height="6"><path d="M0 0H10L5 5.500Z" fill="#1b87cf"/></svg><div class="abs" style="left:605px;top:0;width:172px;height:28px;background:transparent;border-right:1px solid #5a5a5a"></div><div class="t n123" style="left:610.5px;top:5.500px">123</div><div class="t" style="top:7.00px;font-size:12px;left:629.50px;letter-spacing:-0.668px;">商品销售金额（元）</div><svg style="left:761px;top:11px" width="10" height="6"><path d="M0 0H10L5 5.500Z" fill="#1b87cf"/></svg><div class="abs" style="left:29px;top:0;width:1px;height:216px;background:#5a5a5a"></div><div class="abs" style="left:0;top:29px;width:29px;height:20px;background:#70b1ea"></div><div class="abs" style="left:0;top:49px;width:29px;height:1px;background:#5a5a5a"></div><div class="t" style="top:31.50px;font-size:12.4px;left:4.10px;">1</div><div class="abs" style="left:30px;top:29px;width:747px;height:20px;background:#bed9f1"></div><div class="abs" style="left:30px;top:49px;width:747px;height:1px;background:#eaf1f8"></div><div class="abs" style="left:777px;top:49px;width:731px;height:1px;background:#f0f0f0"></div><div class="abs" style="left:117px;top:29px;width:1px;height:21px;background:rgba(255,255,255,0.6)"></div><div class="abs" style="left:30px;top:29px;width:87px;height:20px;background:#6fb0e8;border:1px solid #111;box-shadow:0 0 0 0.3px #111"></div><div class="t" style="top:31.50px;font-size:12.4px;color:#fff;left:34.90px;letter-spacing:0.155px;">2022</div><div class="abs" style="left:281px;top:29px;width:1px;height:21px;background:rgba(255,255,255,0.6)"></div><div class="t" style="top:31.50px;font-size:12.4px;left:123.50px;letter-spacing:-0.052px;">9918000001</div><div class="abs" style="left:492px;top:29px;width:1px;height:21px;background:rgba(255,255,255,0.6)"></div><div class="t" style="top:31.50px;font-size:12.2px;left:286.25px;letter-spacing:0.537px;">服装</div><div class="abs" style="left:604px;top:29px;width:1px;height:21px;background:rgba(255,255,255,0.6)"></div><div class="t" style="top:31.50px;font-size:12.4px;left:552.49px;letter-spacing:0.219px;">328,211</div><div class="abs" style="left:776px;top:29px;width:1px;height:21px;background:rgba(255,255,255,0.6)"></div><div class="t" style="top:31.50px;font-size:12.4px;left:688.48px;letter-spacing:0.213px;">24,378,944.58</div>
<div class="abs" style="left:0;top:50px;width:29px;height:20px;background:#f7f7f7"></div><div class="abs" style="left:0;top:70px;width:29px;height:1px;background:#5a5a5a"></div><div class="t" style="top:52.50px;font-size:12.4px;left:4.10px;">2</div><div class="abs" style="left:30px;top:50px;width:747px;height:20px;background:#fff"></div><div class="abs" style="left:30px;top:70px;width:747px;height:1px;background:#f1f1f1"></div><div class="abs" style="left:777px;top:70px;width:731px;height:1px;background:#f0f0f0"></div><div class="abs" style="left:117px;top:50px;width:1px;height:21px;background:#f1f1f1"></div><div class="t" style="top:52.50px;font-size:12.4px;left:34.90px;letter-spacing:0.155px;">2022</div><div class="abs" style="left:281px;top:50px;width:1px;height:21px;background:#f1f1f1"></div><div class="t" style="top:52.50px;font-size:12.4px;left:123.50px;letter-spacing:-0.044px;">HWRAW4U800AX1003A11</div><div class="abs" style="left:492px;top:50px;width:1px;height:21px;background:#f1f1f1"></div><div class="t" style="top:52.50px;font-size:12.2px;left:286.25px;letter-spacing:0.112px;">羽绒服, 黑色（净色）, 175/92A(50)</div><div class="abs" style="left:604px;top:50px;width:1px;height:21px;background:#f1f1f1"></div><div class="t" style="top:52.50px;font-size:12.4px;left:558.67px;letter-spacing:0.221px;">22,309</div><div class="abs" style="left:776px;top:50px;width:1px;height:21px;background:#f1f1f1"></div><div class="t" style="top:52.50px;font-size:12.4px;left:695.61px;letter-spacing:0.211px;">5,085,998.14</div>
<div class="abs" style="left:0;top:71px;width:29px;height:20px;background:#f7f7f7"></div><div class="abs" style="left:0;top:91px;width:29px;height:1px;background:#5a5a5a"></div><div class="t" style="top:73.50px;font-size:12.4px;left:4.10px;">3</div><div class="abs" style="left:30px;top:71px;width:747px;height:20px;background:#deeaf7"></div><div class="abs" style="left:30px;top:91px;width:747px;height:1px;background:#eaf1f8"></div><div class="abs" style="left:777px;top:91px;width:731px;height:1px;background:#f0f0f0"></div><div class="abs" style="left:117px;top:71px;width:1px;height:21px;background:rgba(255,255,255,0.6)"></div><div class="t" style="top:73.50px;font-size:12.4px;left:34.90px;letter-spacing:0.155px;">2022</div><div class="abs" style="left:281px;top:71px;width:1px;height:21px;background:rgba(255,255,255,0.6)"></div><div class="t" style="top:73.50px;font-size:12.4px;left:123.50px;letter-spacing:-0.044px;">HWRAW4U800AX1004A11</div><div class="abs" style="left:492px;top:71px;width:1px;height:21px;background:rgba(255,255,255,0.6)"></div><div class="t" style="top:73.50px;font-size:12.2px;left:286.25px;letter-spacing:0.112px;">羽绒服, 黑色（净色）, 180/96A(52)</div><div class="abs" style="left:604px;top:71px;width:1px;height:21px;background:rgba(255,255,255,0.6)"></div><div class="t" style="top:73.50px;font-size:12.4px;left:558.67px;letter-spacing:0.221px;">17,563</div><div class="abs" style="left:776px;top:71px;width:1px;height:21px;background:rgba(255,255,255,0.6)"></div><div class="t" style="top:73.50px;font-size:12.4px;left:695.61px;letter-spacing:0.211px;">4,003,647.63</div>
<div class="abs" style="left:0;top:92px;width:29px;height:20px;background:#f7f7f7"></div><div class="abs" style="left:0;top:112px;width:29px;height:1px;background:#5a5a5a"></div><div class="t" style="top:94.50px;font-size:12.4px;left:4.10px;">4</div><div class="abs" style="left:30px;top:92px;width:747px;height:20px;background:#fff"></div><div class="abs" style="left:30px;top:112px;width:747px;height:1px;background:#f1f1f1"></div><div class="abs" style="left:777px;top:112px;width:731px;height:1px;background:#f0f0f0"></div><div class="abs" style="left:117px;top:92px;width:1px;height:21px;background:#f1f1f1"></div><div class="t" style="top:94.50px;font-size:12.4px;left:34.90px;letter-spacing:0.155px;">2022</div><div class="abs" style="left:281px;top:92px;width:1px;height:21px;background:#f1f1f1"></div><div class="t" style="top:94.50px;font-size:12.4px;left:123.50px;letter-spacing:-0.092px;">HWRAW4U025A62003A1S</div><div class="abs" style="left:492px;top:92px;width:1px;height:21px;background:#f1f1f1"></div><div class="t" style="top:94.50px;font-size:12.2px;left:286.25px;letter-spacing:0.052px;">羽绒服, 黑色（净色）, 175/92A(L)</div><div class="abs" style="left:604px;top:92px;width:1px;height:21px;background:#f1f1f1"></div><div class="t" style="top:94.50px;font-size:12.4px;left:565.80px;letter-spacing:0.217px;">7,617</div><div class="abs" style="left:776px;top:92px;width:1px;height:21px;background:#f1f1f1"></div><div class="t" style="top:94.50px;font-size:12.4px;left:695.61px;letter-spacing:0.211px;">3,599,571.03</div>
<div class="abs" style="left:0;top:113px;width:29px;height:20px;background:#f7f7f7"></div><div class="abs" style="left:0;top:133px;width:29px;height:1px;background:#5a5a5a"></div><div class="t" style="top:115.50px;font-size:12.4px;left:4.10px;">5</div><div class="abs" style="left:30px;top:113px;width:747px;height:20px;background:#deeaf7"></div><div class="abs" style="left:30px;top:133px;width:747px;height:1px;background:#eaf1f8"></div><div class="abs" style="left:777px;top:133px;width:731px;height:1px;background:#f0f0f0"></div><div class="abs" style="left:117px;top:113px;width:1px;height:21px;background:rgba(255,255,255,0.6)"></div><div class="t" style="top:115.50px;font-size:12.4px;left:34.90px;letter-spacing:0.155px;">2022</div><div class="abs" style="left:281px;top:113px;width:1px;height:21px;background:rgba(255,255,255,0.6)"></div><div class="t" style="top:115.50px;font-size:12.4px;left:123.50px;letter-spacing:-0.057px;">HNTBW2U002A07003A2S</div><div class="abs" style="left:492px;top:113px;width:1px;height:21px;background:rgba(255,255,255,0.6)"></div><div class="t" style="top:115.50px;font-size:12.2px;left:286.25px;letter-spacing:0.044px;">短袖T恤, 浅蓝（净色）, 175/92A(L)</div><div class="abs" style="left:604px;top:113px;width:1px;height:21px;background:rgba(255,255,255,0.6)"></div><div class="t" style="top:115.50px;font-size:12.4px;left:558.67px;letter-spacing:0.221px;">64,105</div><div class="abs" style="left:776px;top:113px;width:1px;height:21px;background:rgba(255,255,255,0.6)"></div><div class="t" style="top:115.50px;font-size:12.4px;left:695.61px;letter-spacing:0.211px;">3,589,816.91</div>
<div class="abs" style="left:0;top:134px;width:29px;height:20px;background:#f7f7f7"></div><div class="abs" style="left:0;top:154px;width:29px;height:1px;background:#5a5a5a"></div><div class="t" style="top:136.50px;font-size:12.4px;left:4.10px;">6</div><div class="abs" style="left:30px;top:134px;width:747px;height:20px;background:#fff"></div><div class="abs" style="left:30px;top:154px;width:747px;height:1px;background:#f1f1f1"></div><div class="abs" style="left:777px;top:154px;width:731px;height:1px;background:#f0f0f0"></div><div class="abs" style="left:117px;top:134px;width:1px;height:21px;background:#f1f1f1"></div><div class="t" style="top:136.50px;font-size:12.4px;left:34.90px;letter-spacing:0.155px;">2022</div><div class="abs" style="left:281px;top:134px;width:1px;height:21px;background:#f1f1f1"></div><div class="t" style="top:136.50px;font-size:12.4px;left:123.50px;letter-spacing:-0.083px;">HNTBJ2U100AA0004A21</div><div class="abs" style="left:492px;top:134px;width:1px;height:21px;background:#f1f1f1"></div><div class="t" style="top:136.50px;font-size:12.2px;left:286.25px;letter-spacing:0.071px;">短袖T恤, 米白（净色）, 175/92A(50)</div><div class="abs" style="left:604px;top:134px;width:1px;height:21px;background:#f1f1f1"></div><div class="t" style="top:136.50px;font-size:12.4px;left:558.67px;letter-spacing:0.221px;">47,708</div><div class="abs" style="left:776px;top:134px;width:1px;height:21px;background:#f1f1f1"></div><div class="t" style="top:136.50px;font-size:12.4px;left:696.56px;letter-spacing:0.208px;">3,119,567.37</div>
<div class="abs" style="left:0;top:155px;width:29px;height:20px;background:#f7f7f7"></div><div class="abs" style="left:0;top:175px;width:29px;height:1px;background:#5a5a5a"></div><div class="t" style="top:157.50px;font-size:12.4px;left:4.10px;">7</div><div class="abs" style="left:30px;top:155px;width:747px;height:20px;background:#deeaf7"></div><div class="abs" style="left:30px;top:175px;width:747px;height:1px;background:#eaf1f8"></div><div class="abs" style="left:777px;top:175px;width:731px;height:1px;background:#f0f0f0"></div><div class="abs" style="left:117px;top:155px;width:1px;height:21px;background:rgba(255,255,255,0.6)"></div><div class="t" style="top:157.50px;font-size:12.4px;left:34.90px;letter-spacing:0.155px;">2022</div><div class="abs" style="left:281px;top:155px;width:1px;height:21px;background:rgba(255,255,255,0.6)"></div><div class="t" style="top:157.50px;font-size:12.4px;left:123.50px;letter-spacing:-0.106px;">HNTBJ2U471AGD004A21</div><div class="abs" style="left:492px;top:155px;width:1px;height:21px;background:rgba(255,255,255,0.6)"></div><div class="t" style="top:157.50px;font-size:12.2px;left:286.25px;letter-spacing:0.111px;">短袖T恤, 米白花纹, 175/92A(50)</div><div class="abs" style="left:604px;top:155px;width:1px;height:21px;background:rgba(255,255,255,0.6)"></div><div class="t" style="top:157.50px;font-size:12.4px;left:558.67px;letter-spacing:0.221px;">39,070</div><div class="abs" style="left:776px;top:155px;width:1px;height:21px;background:rgba(255,255,255,0.6)"></div><div class="t" style="top:157.50px;font-size:12.4px;left:695.61px;letter-spacing:0.211px;">2,953,421.37</div>
<div class="abs" style="left:0;top:176px;width:29px;height:20px;background:#f7f7f7"></div><div class="abs" style="left:0;top:196px;width:29px;height:1px;background:#5a5a5a"></div><div class="t" style="top:178.50px;font-size:12.4px;left:4.10px;">8</div><div class="abs" style="left:30px;top:176px;width:747px;height:20px;background:#fff"></div><div class="abs" style="left:30px;top:196px;width:747px;height:1px;background:#f1f1f1"></div><div class="abs" style="left:777px;top:196px;width:731px;height:1px;background:#f0f0f0"></div><div class="abs" style="left:117px;top:176px;width:1px;height:21px;background:#f1f1f1"></div><div class="t" style="top:178.50px;font-size:12.4px;left:34.90px;letter-spacing:0.155px;">2022</div><div class="abs" style="left:281px;top:176px;width:1px;height:21px;background:#f1f1f1"></div><div class="t" style="top:178.50px;font-size:12.4px;left:123.50px;letter-spacing:-0.066px;">HWRAW4U025A62004A1S</div><div class="abs" style="left:492px;top:176px;width:1px;height:21px;background:#f1f1f1"></div><div class="t" style="top:178.50px;font-size:12.2px;left:286.25px;letter-spacing:0.066px;">羽绒服, 黑色（净色）, 180/96A(XL)</div><div class="abs" style="left:604px;top:176px;width:1px;height:21px;background:#f1f1f1"></div><div class="t" style="top:178.50px;font-size:12.4px;left:566.75px;letter-spacing:0.211px;">5,811</div><div class="abs" style="left:776px;top:176px;width:1px;height:21px;background:#f1f1f1"></div><div class="t" style="top:178.50px;font-size:12.4px;left:695.61px;letter-spacing:0.211px;">2,740,288.59</div>
<div class="abs" style="left:0;top:197px;width:29px;height:20px;background:#f7f7f7"></div><div class="abs" style="left:0;top:217px;width:29px;height:1px;background:#5a5a5a"></div><div class="t" style="top:199.50px;font-size:12.4px;left:4.10px;">9</div><div class="abs" style="left:30px;top:197px;width:747px;height:20px;background:#deeaf7"></div><div class="abs" style="left:30px;top:217px;width:747px;height:1px;background:#eaf1f8"></div><div class="abs" style="left:777px;top:217px;width:731px;height:1px;background:#f0f0f0"></div><div class="abs" style="left:117px;top:197px;width:1px;height:21px;background:rgba(255,255,255,0.6)"></div><div class="t" style="top:199.50px;font-size:12.4px;left:34.90px;letter-spacing:0.155px;">2022</div><div class="abs" style="left:281px;top:197px;width:1px;height:21px;background:rgba(255,255,255,0.6)"></div><div class="t" style="top:199.50px;font-size:12.4px;left:123.50px;letter-spacing:-0.030px;">HNTBW2U002A07004A2S</div><div class="abs" style="left:492px;top:197px;width:1px;height:21px;background:rgba(255,255,255,0.6)"></div><div class="t" style="top:199.50px;font-size:12.2px;left:286.25px;letter-spacing:0.018px;">短袖T恤, 浅蓝（净色）, 180/96A(XL)</div><div class="abs" style="left:604px;top:197px;width:1px;height:21px;background:rgba(255,255,255,0.6)"></div><div class="t" style="top:199.50px;font-size:12.4px;left:558.67px;letter-spacing:0.221px;">48,780</div><div class="abs" style="left:776px;top:197px;width:1px;height:21px;background:rgba(255,255,255,0.6)"></div><div class="t" style="top:199.50px;font-size:12.4px;left:695.61px;letter-spacing:0.211px;">2,734,302.12</div>
</div><div class="abs" style="left:1557px;top:586px;width:17px;height:216px;background:#f7f7f7"></div><div class="abs" style="left:1558px;top:603px;width:15px;height:17px;background:#c9ccc9"></div><svg style="left:1561px;top:592px" width="9" height="6"><path d="M0.700 5L4.500 1.200L8.300 5" stroke="#5a5a5a" stroke-width="2" fill="none"/></svg><svg style="left:1561px;top:790px" width="9" height="6"><path d="M0.700 1L4.500 4.800L8.300 1" stroke="#5a5a5a" stroke-width="2" fill="none"/></svg>
<svg style="left:1579px;top:595px" width="15" height="15" viewBox="0 0 15 15"><rect x="3" y="0.600" width="11.400" height="11.400" fill="#fff" stroke="#1b87cf" stroke-width="1.200"/><rect x="8" y="1" width="6" height="7" fill="#4db5ec"/><rect x="3" y="0.600" width="11.400" height="2" fill="#1b87cf"/><circle cx="3.500" cy="11.500" r="2.800" fill="#1b87cf"/><circle cx="3.500" cy="11.500" r="1" fill="#fff"/></svg><div class="vt2" style="left:1578px;top:610px;width:16px;height:26px"><span>面板</span></div><svg style="left:1578px;top:653px" width="15" height="14" viewBox="0 0 15 14"><rect x="0.600" y="0.600" width="13.800" height="12.800" fill="#fff" stroke="#1b87cf" stroke-width="1.200"/><rect x="1.200" y="1.200" width="12.600" height="8" fill="#1b87cf"/><path d="M1.500 2.300H13.500M1.500 5.900H13.500" stroke="#fff" stroke-width="1.700" stroke-dasharray="1.800 1.800"/><path d="M3.300 4.100H13.500M3.300 7.700H13.500" stroke="#cfeafa" stroke-width="1.700" stroke-dasharray="1.800 1.800"/></svg><svg style="left:1578px;top:675px" width="15" height="15" viewBox="0 0 15 15"><circle cx="7.500" cy="7.500" r="6.700" fill="#fff" stroke="#1b87cf" stroke-width="1.300"/><g fill="#1b87cf"><circle cx="5.300" cy="5.300" r="1.300"/><circle cx="9.700" cy="5.300" r="1.300"/><circle cx="5.300" cy="9.700" r="1.300"/><circle cx="9.700" cy="9.700" r="1.300"/></g></svg><svg style="left:1578px;top:696px" width="15" height="16" viewBox="0 0 15 16"><rect x="0.600" y="5.600" width="13.800" height="9.800" fill="#fff" stroke="#1b87cf" stroke-width="1.200"/><rect x="0.600" y="5.600" width="13.800" height="2.200" fill="#1b87cf"/><path d="M0.600 10.200H14.400M0.600 12.800H14.400M3.800 5.600V15.400M11 5.600V15.400" stroke="#1b87cf" stroke-width="1"/><rect x="5.500" y="3" width="3.400" height="12.400" fill="#f58a1f"/><path d="M7.200 0V3M5.800 1.500H8.600" stroke="#f58a1f" stroke-width="1"/></svg><svg style="left:1578px;top:719px" width="15" height="14" viewBox="0 0 15 14"><rect x="0.600" y="0.600" width="13.800" height="12.800" fill="#fff" stroke="#1b87cf" stroke-width="1.200"/><rect x="0.600" y="0.600" width="13.800" height="2" fill="#1b87cf"/><rect x="1.500" y="3.500" width="7" height="5" fill="#4db5ec"/><rect x="9" y="8" width="6" height="6" fill="#f7f7f7"/><path d="M9.500 9.500V12.500M14.500 9.500V12.500M9.500 11H14.500" stroke="#1b87cf" stroke-width="1"/></svg><svg style="left:1578px;top:741px" width="15" height="15" viewBox="0 0 15 15"><circle cx="3.500" cy="3.500" r="3" fill="#1b87cf"/><circle cx="11" cy="3.500" r="3" fill="#1b87cf"/><circle cx="3.500" cy="11" r="3" fill="#1b87cf"/><circle cx="11" cy="11" r="3" fill="#f58a1f"/><path d="M2 3.500H5M9.500 3.500H12.500M11 2V5M2.400 9.900L4.600 12.100M4.600 9.900L2.400 12.100M9.500 10.300H12.500M9.500 11.700H12.500" stroke="#fff" stroke-width="0.900"/></svg><svg style="left:1577px;top:816px" width="16" height="15" viewBox="0 0 16 15"><rect x="0.500" y="1.500" width="4" height="13" rx="1.200" fill="#1b87cf"/><rect x="6" y="10.500" width="9.500" height="4" rx="0.800" fill="#1b87cf"/><path d="M7.500 3.500C11 3 13.500 5.500 13.500 9" stroke="#1b87cf" stroke-width="1.500" fill="none"/><path d="M6 3.600L9.500 0.800V6.400Z" fill="#1b87cf"/></svg>
<div class="abs" style="left:24px;top:833px;width:1576px;height:1px;background:#d5d5d5"></div><svg style="left:60px;top:809px" width="14" height="15" viewBox="0 0 14 15"><g transform="rotate(-38 7 7.500)" fill="none" stroke="#1b9be0"><rect x="2" y="2.500" width="10" height="10" rx="3.200" stroke-width="2.100"/><path d="M4.800 6.600C6 5 8 5 9.200 6.400M9.200 8.600C8 10.200 6 10.200 4.800 8.800" stroke-width="1.100"/><path d="M9.600 4.800V6.900H7.600M4.400 10.400V8.300H6.400" stroke-width="1"/></g></svg><div class="t" style="top:810.00px;font-size:12.2px;left:78.50px;letter-spacing:0.312px;">刷新</div><svg style="left:117.5px;top:816px" width="8" height="5" viewBox="0 0 8 5"><path d="M0.3 0.3H7.700L4 4.300Z" fill="#1a1a1a"/></svg><div class="abs" style="left:134px;top:810px;width:2px;height:14px;background-image:linear-gradient(#bfb5a1 50%,transparent 50%);background-size:2px 4px"></div><svg style="left:146px;top:810px" width="14" height="14" viewBox="0 0 14 14"><circle cx="7" cy="7" r="6.300" fill="none" stroke="#a3a3a3" stroke-width="1.200"/><path d="M4 7L6.300 9.300L10.200 4.800" stroke="#a3a3a3" stroke-width="1.300" fill="none"/></svg><div class="t" style="top:810.00px;font-size:12.2px;color:#a3a3a3;left:165.50px;letter-spacing:-0.188px;">保存</div><svg style="left:203.5px;top:816px" width="8" height="5" viewBox="0 0 8 5"><path d="M0.3 0.3H7.700L4 4.300Z" fill="#777"/></svg><svg style="left:221px;top:812px" width="12" height="12" viewBox="0 0 12 12"><rect x="0.600" y="0.600" width="10.800" height="10.800" fill="none" stroke="#a3a3a3" stroke-width="1.100"/><path d="M3.300 3.300L8.700 8.700M8.700 3.300L3.300 8.700" stroke="#a3a3a3" stroke-width="1.100"/></svg><div class="t" style="top:810.00px;font-size:12.2px;color:#a3a3a3;left:238.50px;letter-spacing:0.012px;">取消</div><div class="abs" style="left:273px;top:804px;width:1px;height:27px;background:#808080"></div><svg style="left:284px;top:811px" width="15" height="14" viewBox="0 0 15 14"><path d="M0 1.500H14M0 6.500H9M0 11.500H6" stroke="#1b87cf" stroke-width="1.700"/><path d="M8 12.500L14.500 6.500" stroke="#1b87cf" stroke-width="1.800"/></svg><svg style="left:308px;top:811px" width="15" height="14" viewBox="0 0 15 14"><path d="M0 1.500H14M0 6.500H7M0 11.500H7" stroke="#a3a3a3" stroke-width="1.900"/><path d="M8.500 9.500H15M11.700 6.300V12.800" stroke="#a3a3a3" stroke-width="1.900"/></svg><svg style="left:332px;top:811px" width="15" height="14" viewBox="0 0 15 14"><path d="M0 1.500H14M0 6.500H3M0 11.500H3" stroke="#a3a3a3" stroke-width="1.900"/><rect x="5" y="5" width="9" height="8" rx="3" fill="none" stroke="#a3a3a3" stroke-width="1.100"/><path d="M7.500 9H11.500M9.500 7V11" stroke="#a3a3a3" stroke-width="1"/></svg><svg style="left:356px;top:811px" width="15" height="14" viewBox="0 0 15 14"><path d="M0 1.500H14M0 6.500H7M0 11.500H7" stroke="#a3a3a3" stroke-width="1.900"/><path d="M9 9.500H14.500" stroke="#a3a3a3" stroke-width="1.600" opacity="0.700"/></svg><div class="abs" style="left:380px;top:810px;width:2px;height:14px;background-image:linear-gradient(#bfb5a1 50%,transparent 50%);background-size:2px 4px"></div><svg style="left:388px;top:810px" width="12" height="15" viewBox="0 0 12 15"><path d="M1 0V15" stroke="#a3a3a3" stroke-width="1.800"/><path d="M10.500 1L4 7.500L10.500 14" stroke="#a3a3a3" stroke-width="1.800" fill="none"/></svg><svg style="left:412px;top:810px" width="9" height="15" viewBox="0 0 9 15"><path d="M7.500 1L1.500 7.500L7.500 14" stroke="#a3a3a3" stroke-width="1.800" fill="none"/></svg><svg style="left:437px;top:810px" width="9" height="15" viewBox="0 0 9 15"><path d="M1.500 1L7.500 7.500L1.500 14" stroke="#1b87cf" stroke-width="1.800" fill="none"/></svg><svg style="left:457px;top:810px" width="12" height="15" viewBox="0 0 12 15"><path d="M11 0V15" stroke="#1b87cf" stroke-width="1.800"/><path d="M1.500 1L8 7.500L1.500 14" stroke="#1b87cf" stroke-width="1.800" fill="none"/></svg><svg style="left:478px;top:810px" width="15" height="14" viewBox="0 0 15 14"><path d="M0.700 4V0.700H4M11 0.700H14.300V4M14.300 10V13.300H11M4 13.300H0.700V10" stroke="#1b87cf" stroke-width="1.400" fill="none"/><rect x="4" y="3.500" width="7" height="7.500" fill="#35a8e8" stroke="#1b87cf" stroke-width="1"/></svg><div class="abs" style="left:503px;top:810px;width:2px;height:14px;background-image:linear-gradient(#bfb5a1 50%,transparent 50%);background-size:2px 4px"></div><svg style="left:518px;top:810px" width="13" height="14" viewBox="0 0 13 14"><path d="M0.700 9V13.300H12.300V9" stroke="#1b87cf" stroke-width="1.300" fill="none"/><path d="M6.500 10.500V1.500M3.300 4.500L6.500 1.300L9.700 4.500" stroke="#1b87cf" stroke-width="1.400" fill="none"/></svg><div class="t" id="exp" style="top:810.00px;font-size:12.2px;left:535.50px;letter-spacing:-0.132px;">导出数据...</div><svg style="left:607.5px;top:816px" width="8" height="5" viewBox="0 0 8 5"><path d="M0.3 0.3H7.700L4 4.300Z" fill="#1a1a1a"/></svg><div class="abs" style="left:624px;top:810px;width:2px;height:14px;background-image:linear-gradient(#bfb5a1 50%,transparent 50%);background-size:2px 4px"></div><svg style="left:631.500px;top:810px" width="15" height="15" viewBox="-7.500 -7.500 15 15"><g fill="#1b87cf"><circle r="5.300"/><rect x="-1.700" y="-7.400" width="3.400" height="3.600" transform="rotate(0)"/><rect x="-1.700" y="-7.400" width="3.400" height="3.600" transform="rotate(45)"/><rect x="-1.700" y="-7.400" width="3.400" height="3.600" transform="rotate(90)"/><rect x="-1.700" y="-7.400" width="3.400" height="3.600" transform="rotate(135)"/><rect x="-1.700" y="-7.400" width="3.400" height="3.600" transform="rotate(180)"/><rect x="-1.700" y="-7.400" width="3.400" height="3.600" transform="rotate(225)"/><rect x="-1.700" y="-7.400" width="3.400" height="3.600" transform="rotate(270)"/><rect x="-1.700" y="-7.400" width="3.400" height="3.600" transform="rotate(315)"/></g><circle r="2.300" fill="#f7f7f7"/></svg><div class="abs" style="left:654px;top:806px;width:54px;height:23px;background:#fff;border:1px solid #7a7a7a"></div><div class="t" style="top:810.00px;font-size:12.4px;left:657.50px;letter-spacing:0.237px;">200</div><svg style="left:715px;top:810px" width="14" height="14" viewBox="0 0 14 14"><path d="M0.700 9.500V13.300H13.300V9.500" stroke="#1b87cf" stroke-width="1.300" fill="none"/><path d="M2.500 0.500L7 5.500L11.500 0.500M7 5.500V10M4.800 8L7 10.200L9.200 8" stroke="#1b87cf" stroke-width="1.200" fill="none"/></svg><div class="t" id="cnt" style="top:809.50px;font-size:12.4px;left:736.50px;letter-spacing:0.172px;">860,714</div><div class="abs" style="left:790px;top:810px;width:2px;height:14px;background-image:linear-gradient(#bfb5a1 50%,transparent 50%);background-size:2px 4px"></div><div class="t" style="left:818px;top:807px;font-size:9px;color:#3a7ab8">···</div><div class="t" id="stat" style="top:809.50px;font-size:12.4px;left:835.90px;letter-spacing:0.103px;">200 行已获取 - 5.928s (7ms 获取), 2025-10-21 20:40:13</div>
<div class="abs" style="left:0;top:834px;width:1600px;height:26px;background:#f6f6f6"></div><div class="abs" style="left:778px;top:834px;width:1px;height:23px;background:#a5a5a5"></div><div class="abs" style="left:814px;top:834px;width:1px;height:23px;background:#a5a5a5"></div><div class="abs" style="left:841px;top:834px;width:1px;height:23px;background:#a5a5a5"></div><div class="abs" style="left:975px;top:834px;width:1px;height:23px;background:#a5a5a5"></div><div class="abs" style="left:1103px;top:834px;width:1px;height:23px;background:#a5a5a5"></div><div class="abs" style="left:1231px;top:834px;width:1px;height:23px;background:#a5a5a5"></div><div class="t" style="top:837.00px;font-size:12.4px;left:785.90px;letter-spacing:-1.066px;">CST</div><div class="t" style="top:837.00px;font-size:12.4px;left:821.50px;letter-spacing:0.453px;">zh</div><div class="t" style="top:837.00px;font-size:12.4px;left:848.50px;letter-spacing:0.109px;">可写</div><div class="t" style="top:837.00px;font-size:12.4px;left:983.20px;letter-spacing:-0.416px;">智能插入</div><div class="t" style="top:837.00px;font-size:12.4px;left:1110.90px;letter-spacing:0.176px;">1055 : 1 : 46416</div><div class="t" style="top:837.00px;font-size:12.4px;left:1238.70px;letter-spacing:0.111px;">Sel: 0 | 0</div><div class="abs" style="left:1315px;top:840px;width:2px;height:14px;background-image:linear-gradient(#bfb5a1 50%,transparent 50%);background-size:2px 4px"></div>
<div class="abs" id="wm" style="left:0;top:41px;width:1600px;height:819px;overflow:hidden;pointer-events:none"><div class="wm" style="left:-142.7px;top:117.69999999999999px"><div>audit审计01(Audit1)<br>audit-172.18.210.237</div></div><div class="wm" style="left:157.3px;top:117.69999999999999px"><div>audit审计01(Audit1)<br>audit-172.18.210.237</div></div><div class="wm" style="left:457.3px;top:117.69999999999999px"><div>audit审计01(Audit1)<br>audit-172.18.210.237</div></div><div class="wm" style="left:757.3px;top:117.69999999999999px"><div>audit审计01(Audit1)<br>audit-172.18.210.237</div></div><div class="wm" style="left:1057.3px;top:117.69999999999999px"><div>audit审计01(Audit1)<br>audit-172.18.210.237</div></div><div class="wm" style="left:1357.3px;top:117.69999999999999px"><div>audit审计01(Audit1)<br>audit-172.18.210.237</div></div><div class="wm" style="left:1657.3px;top:117.69999999999999px"><div>audit审计01(Audit1)<br>audit-172.18.210.237</div></div><div class="wm" style="left:-142.7px;top:415.7px"><div>audit审计01(Audit1)<br>audit-172.18.210.237</div></div><div class="wm" style="left:157.3px;top:415.7px"><div>audit审计01(Audit1)<br>audit-172.18.210.237</div></div><div class="wm" style="left:457.3px;top:415.7px"><div>audit审计01(Audit1)<br>audit-172.18.210.237</div></div><div class="wm" style="left:757.3px;top:415.7px"><div>audit审计01(Audit1)<br>audit-172.18.210.237</div></div><div class="wm" style="left:1057.3px;top:415.7px"><div>audit审计01(Audit1)<br>audit-172.18.210.237</div></div><div class="wm" style="left:1357.3px;top:415.7px"><div>audit审计01(Audit1)<br>audit-172.18.210.237</div></div><div class="wm" style="left:1657.3px;top:415.7px"><div>audit审计01(Audit1)<br>audit-172.18.210.237</div></div><div class="wm" style="left:-142.7px;top:713.7px"><div>audit审计01(Audit1)<br>audit-172.18.210.237</div></div><div class="wm" style="left:157.3px;top:713.7px"><div>audit审计01(Audit1)<br>audit-172.18.210.237</div></div><div class="wm" style="left:457.3px;top:713.7px"><div>audit审计01(Audit1)<br>audit-172.18.210.237</div></div><div class="wm" style="left:757.3px;top:713.7px"><div>audit审计01(Audit1)<br>audit-172.18.210.237</div></div><div class="wm" style="left:1057.3px;top:713.7px"><div>audit审计01(Audit1)<br>audit-172.18.210.237</div></div><div class="wm" style="left:1357.3px;top:713.7px"><div>audit审计01(Audit1)<br>audit-172.18.210.237</div></div><div class="wm" style="left:1657.3px;top:713.7px"><div>audit审计01(Audit1)<br>audit-172.18.210.237</div></div></div>
<div class="abs" style="left:0;top:860px;width:1600px;height:40px;background:#000"></div><div class="abs" style="left:294px;top:860px;width:48px;height:40px;background:#333"></div><div class="abs" style="left:294px;top:898px;width:48px;height:2px;background:#76b9ed"></div><svg style="left:16px;top:872px" width="16" height="16" viewBox="0 0 16 16"><path d="M0 2.300L6.500 1.400V7.600H0ZM7.300 1.300L16 0V7.600H7.300ZM0 8.400H6.500V14.600L0 13.700ZM7.300 8.400H16V16L7.300 14.700Z" fill="#fff"/></svg><svg style="left:63px;top:871px" width="18" height="18" viewBox="0 0 18 18"><circle cx="10.500" cy="7" r="5.500" stroke="#fff" stroke-width="1.300" fill="none"/><path d="M6.500 11L0.800 16.800" stroke="#fff" stroke-width="1.400"/></svg><svg style="left:111px;top:873px" width="18" height="15" viewBox="0 0 18 15"><path d="M1 0.500H13M1 14.500H13M3 3.500H11V11.500H3Z" stroke="#fff" stroke-width="1.200" fill="none"/><path d="M15.500 1V4M15.500 6.500V14" stroke="#fff" stroke-width="1.500"/></svg><svg style="left:159px;top:866px" width="25" height="26" viewBox="0 0 25 26"><defs><linearGradient id="ieg" x1="0" y1="0" x2="0" y2="1"><stop offset="0" stop-color="#5fd0fb"/><stop offset="1" stop-color="#1a8fe0"/></linearGradient></defs><text x="12.800" y="23.300" font-family="Liberation Sans, sans-serif" font-weight="bold" font-size="36" text-anchor="middle" fill="url(#ieg)">e</text><path d="M2.500 22C-1 17 5 7 14 3C19 1 23 2 23.500 5" stroke="#f3c21b" stroke-width="2" fill="none" stroke-linecap="round"/></svg><svg style="left:209px;top:870px" width="21" height="18" viewBox="0 0 21 18"><path d="M0 1H7.500L9 3H21V17.500H0Z" fill="#e9b93c"/><path d="M0 4.500H21V17.500H0Z" fill="#fcdc7e"/><path d="M6 11.500H15V17.500H6Z" fill="#2f9be8"/><path d="M8.800 14.300H12.200V17.500H8.800Z" fill="#fcdc7e"/></svg><svg style="left:257px;top:868px" width="24" height="24" viewBox="0 0 32 32">
<circle cx="16" cy="16" r="14.600" fill="#fff" stroke="#3fb6be" stroke-width="2.600"/>
<path d="M10.700 28.500L13 18.800C14.500 19.800 17 20.500 19.900 22.600L22.200 21L24.500 17.200L23.700 22.600C23 25 22 26.500 20.700 28C18.500 30 13.500 30 10.700 28.500Z" fill="#3a2f2b"/>
<ellipse cx="21.400" cy="11.300" rx="2.800" ry="1.600" transform="rotate(-12 21.400 11.300)" fill="#3a2f2b"/>
<circle cx="13.800" cy="10.200" r="0.900" fill="#3a2f2b"/>
<path d="M5 12.500C6.500 12 7 14 6.800 16C6.600 18 6.800 19.500 6.500 20.500C5 18.500 4.500 15 5 12.500Z" fill="#4a3d38"/>
<path d="M6.800 15C7.500 11.500 10 6.500 13.500 5.200C15 4.600 17 4.500 18.500 4.700" stroke="#5a4d48" stroke-width="0.900" fill="none"/>
<path d="M21.800 15.700L23 18.800L24.900 16.500" stroke="#3a2f2b" stroke-width="0.800" fill="none"/></svg><svg style="left:306px;top:868px" width="24" height="24" viewBox="0 0 32 32">
<circle cx="16" cy="16" r="14.600" fill="#fff" stroke="#3fb6be" stroke-width="2.600"/>
<path d="M10.700 28.500L13 18.800C14.500 19.800 17 20.500 19.900 22.600L22.200 21L24.500 17.200L23.700 22.600C23 25 22 26.500 20.700 28C18.500 30 13.500 30 10.700 28.500Z" fill="#3a2f2b"/>
<ellipse cx="21.400" cy="11.300" rx="2.800" ry="1.600" transform="rotate(-12 21.400 11.300)" fill="#3a2f2b"/>
<circle cx="13.800" cy="10.200" r="0.900" fill="#3a2f2b"/>
<path d="M5 12.500C6.500 12 7 14 6.800 16C6.600 18 6.800 19.500 6.500 20.500C5 18.500 4.500 15 5 12.500Z" fill="#4a3d38"/>
<path d="M6.800 15C7.500 11.500 10 6.500 13.500 5.200C15 4.600 17 4.500 18.500 4.700" stroke="#5a4d48" stroke-width="0.900" fill="none"/>
<path d="M21.800 15.700L23 18.800L24.900 16.500" stroke="#3a2f2b" stroke-width="0.800" fill="none"/></svg><svg style="left:1348px;top:876px" width="12" height="7"><path d="M0.500 6.500L6 1L11.500 6.500" stroke="#fff" stroke-width="1.200" fill="none"/></svg><svg style="left:1373px;top:872px" width="13" height="17" viewBox="0 0 13 17"><rect x="2.500" y="0.500" width="5" height="4" fill="none" stroke="#fff"/><rect x="0.500" y="4.500" width="9" height="11" rx="1" fill="none" stroke="#fff"/><path d="M7.500 14L9.500 16L12.500 12.500" stroke="#ccc" stroke-width="1" fill="none"/><path d="M4 2.500H6" stroke="#fff" stroke-width="1"/></svg><svg style="left:1394px;top:874px" width="17" height="14" viewBox="0 0 17 14"><rect x="4.500" y="0.500" width="11" height="8" fill="none" stroke="#fff"/><path d="M10 8.500V12.500M6.500 12.500H13.500" stroke="#fff"/><rect x="0.500" y="0.500" width="4" height="4" fill="#000" stroke="#fff"/><path d="M2.500 4.500V9.500H6" stroke="#fff" fill="none"/></svg><svg style="left:1418px;top:873px" width="17" height="15" viewBox="0 0 17 15"><path d="M0.500 5H3L6.500 1.500V13.500L3 10H0.500Z" stroke="#fff" fill="none"/><path d="M8.500 5.500C9.500 6.500 9.500 8.500 8.500 9.500M10.500 3.500C12.500 5.500 12.500 9.500 10.500 11.500M12.500 1.500C15.500 4.500 15.500 10.500 12.500 13.500" stroke="#fff" fill="none"/></svg><div class="t" id="eng" style="top:871.60px;font-size:12.4px;color:#fff;left:1443.10px;letter-spacing:-0.353px;">ENG</div><div class="t" id="tm" style="top:862.60px;font-size:12.4px;color:#fff;left:1494.50px;letter-spacing:0.197px;">20:40</div><div class="t" id="dt" style="top:882.00px;font-size:12.4px;color:#fff;left:1476.50px;letter-spacing:0.398px;">2025/10/21</div><svg style="left:1559px;top:872px" width="24" height="24" viewBox="0 0 24 24"><path d="M0.500 0.500H15.500V11.500H5.500L2.500 14.500V11.500H0.500Z" fill="#fff"/><path d="M3 3.500H13M3 6H13M3 8.500H10" stroke="#000" stroke-width="0.900"/><circle cx="15.500" cy="15" r="7.500" fill="#5a5a5a" stroke="#000" stroke-width="1"/><text x="15.500" y="19" font-family="Liberation Sans, sans-serif" font-weight="bold" font-size="11" text-anchor="middle" fill="#fff">1</text></svg><div class="abs" style="left:1595px;top:860px;width:1px;height:40px;background:#5a5a5a"></div>
</body></html>
